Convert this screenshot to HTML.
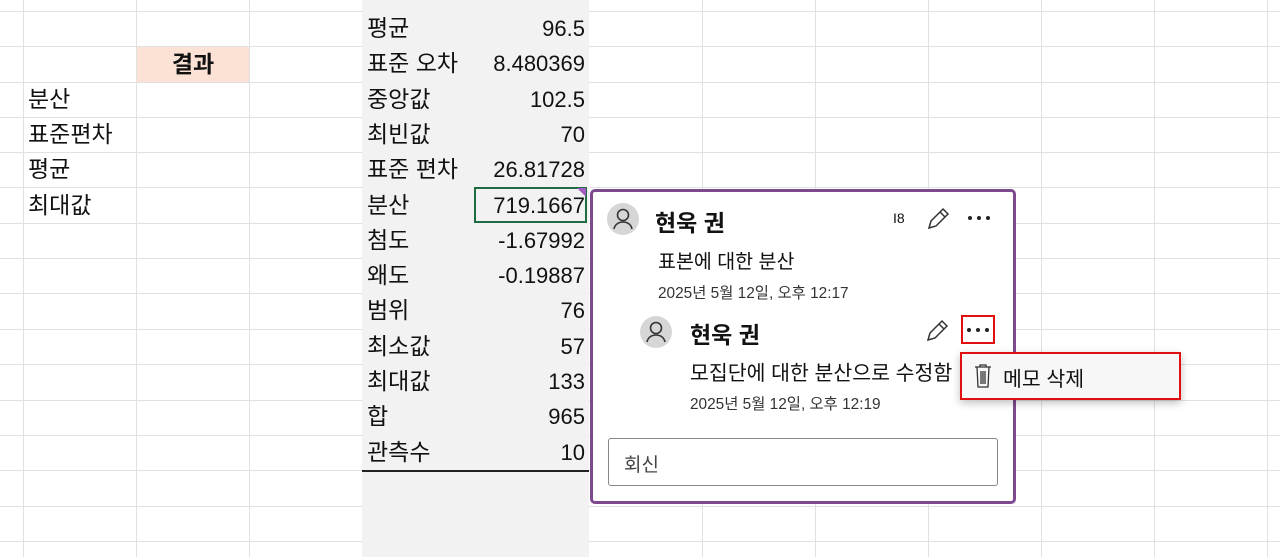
<!DOCTYPE html>
<html><head><meta charset="utf-8"><style>
body{margin:0;width:1280px;height:557px;overflow:hidden;background:#fff;font-family:"Liberation Sans","Noto Sans CJK KR",sans-serif;color:#111;position:relative}
.a{position:absolute}
.vl{position:absolute;top:0;height:557px;width:1px;background:#e1e1e1}
.hl{position:absolute;left:0;width:1280px;height:1px;background:#e1e1e1}
.t{position:absolute;font-size:23px;line-height:35px;white-space:nowrap}
.n{position:absolute;font-size:22px;line-height:35px;text-align:right}
.dots{position:absolute;width:30px;height:6px}
.dots i{position:absolute;top:0;width:4px;height:4px;border-radius:50%;background:#222}
</style></head><body>
<div class="vl" style="left:23px"></div><div class="vl" style="left:136px"></div><div class="vl" style="left:249px"></div>
<div class="vl" style="left:702px"></div><div class="vl" style="left:815px"></div><div class="vl" style="left:928px"></div><div class="vl" style="left:1041px"></div><div class="vl" style="left:1154px"></div><div class="vl" style="left:1267px"></div>
<div class="hl" style="top:11px"></div><div class="hl" style="top:46px"></div><div class="hl" style="top:82px"></div><div class="hl" style="top:117px"></div><div class="hl" style="top:152px"></div><div class="hl" style="top:187px"></div><div class="hl" style="top:223px"></div><div class="hl" style="top:258px"></div><div class="hl" style="top:293px"></div><div class="hl" style="top:329px"></div><div class="hl" style="top:364px"></div><div class="hl" style="top:400px"></div><div class="hl" style="top:435px"></div><div class="hl" style="top:470px"></div><div class="hl" style="top:506px"></div><div class="hl" style="top:541px"></div>
<div class="a" style="left:137px;top:47px;width:112px;height:35px;background:#fbe2d5"></div>
<div class="t" style="left:137px;top:47px;width:112px;text-align:center;font-weight:bold">결과</div>
<div class="t" style="left:28px;top:82px">분산</div>
<div class="t" style="left:28px;top:117px">표준편차</div>
<div class="t" style="left:28px;top:152px">평균</div>
<div class="t" style="left:28px;top:188px">최대값</div>
<div class="a" style="left:362px;top:0;width:227px;height:557px;background:#f2f2f2"></div>
<div class="a" style="left:362px;top:470px;width:227px;height:2px;background:#222"></div>
<div class="a" style="left:474px;top:187px;width:113px;height:36px;border:2px solid #1e6b41;box-sizing:border-box"></div>
<div class="a" style="left:577px;top:188px;width:0;height:0;border-top:9px solid #a05cc0;border-left:9px solid transparent"></div>
<div id="stats"></div>
<script>
var d=[["평균","96.5"],["표준 오차","8.480369"],["중앙값","102.5"],["최빈값","70"],["표준 편차","26.81728"],["분산","719.1667"],["첨도","-1.67992"],["왜도","-0.19887"],["범위","76"],["최소값","57"],["최대값","133"],["합","965"],["관측수","10"]];
var h="";d.forEach(function(x,i){var y=11+i*35.3;h+='<div class="t" style="left:367px;top:'+y+'px">'+x[0]+'</div><div class="n" style="left:470px;width:115px;top:'+y+'px">'+x[1]+'</div>';});
document.getElementById("stats").innerHTML=h;
</script>
<div class="a" style="left:590px;top:189px;width:426px;height:315px;border:3px solid #7e4a8e;border-radius:5px;box-sizing:border-box;background:#fff"></div>
<svg class="a" style="left:607px;top:203px" width="32" height="32"><circle cx="16" cy="16" r="16" fill="#d6d6d6"/><circle cx="16" cy="12" r="5.5" fill="none" stroke="#333" stroke-width="1.6"/><path d="M7 26c1-5 5-7 9-7s8 2 9 7" fill="none" stroke="#333" stroke-width="1.6"/></svg>
<div class="a" style="left:655px;top:204px;font-size:23px;font-weight:bold">현욱 권</div>
<div class="a" style="left:893px;top:210px;font-size:14px">I8</div>
<svg class="a" style="left:925px;top:206px" width="26" height="26"><path d="M4 22l2-7L18 3l5 5L11 20z M15 6l5 5" fill="none" stroke="#333" stroke-width="1.5"/></svg>
<div class="dots" style="left:966px;top:216px"><i style="left:2px"></i><i style="left:11px"></i><i style="left:20px"></i></div>
<div class="a" style="left:658px;top:245px;font-size:19.5px;white-space:nowrap">표본에 대한 분산</div>
<div class="a" style="left:658px;top:281px;font-size:15.4px;color:#333;white-space:nowrap">2025년 5월 12일, 오후 12:17</div>
<svg class="a" style="left:640px;top:316px" width="32" height="32"><circle cx="16" cy="16" r="16" fill="#d6d6d6"/><circle cx="16" cy="12" r="5.5" fill="none" stroke="#333" stroke-width="1.6"/><path d="M7 26c1-5 5-7 9-7s8 2 9 7" fill="none" stroke="#333" stroke-width="1.6"/></svg>
<div class="a" style="left:690px;top:316px;font-size:23px;font-weight:bold">현욱 권</div>
<svg class="a" style="left:924px;top:318px" width="26" height="26"><path d="M4 22l2-7L18 3l5 5L11 20z M15 6l5 5" fill="none" stroke="#333" stroke-width="1.5"/></svg>
<div class="a" style="left:961px;top:315px;width:34px;height:29px;border:2px solid #e01010;box-sizing:border-box"></div>
<div class="dots" style="left:965px;top:328px"><i style="left:2px"></i><i style="left:11px"></i><i style="left:20px"></i></div>
<div class="a" style="left:690px;top:356px;font-size:20.5px;white-space:nowrap">모집단에 대한 분산으로 수정함</div>
<div class="a" style="left:690px;top:392px;font-size:15.4px;color:#333;white-space:nowrap">2025년 5월 12일, 오후 12:19</div>
<div class="a" style="left:608px;top:438px;width:390px;height:48px;border:1px solid #888;border-radius:3px;box-sizing:border-box"></div>
<div class="a" style="left:624px;top:450px;font-size:19px;color:#444">회신</div>
<div class="a" style="left:960px;top:352px;width:221px;height:48px;background:#f7f7f7;border:2px solid #e01010;box-sizing:border-box;box-shadow:0 3px 8px rgba(0,0,0,.25)"></div>
<svg class="a" style="left:972px;top:362px" width="22" height="28"><path d="M3 5h16M8 5V3h6v2M5 5l1 20h10l1-20M9 9v13M11 9v13M13 9v13" fill="none" stroke="#333" stroke-width="1.3"/></svg>
<div class="a" style="left:1003px;top:362px;font-size:20.5px;white-space:nowrap">메모 삭제</div>
</body></html>
